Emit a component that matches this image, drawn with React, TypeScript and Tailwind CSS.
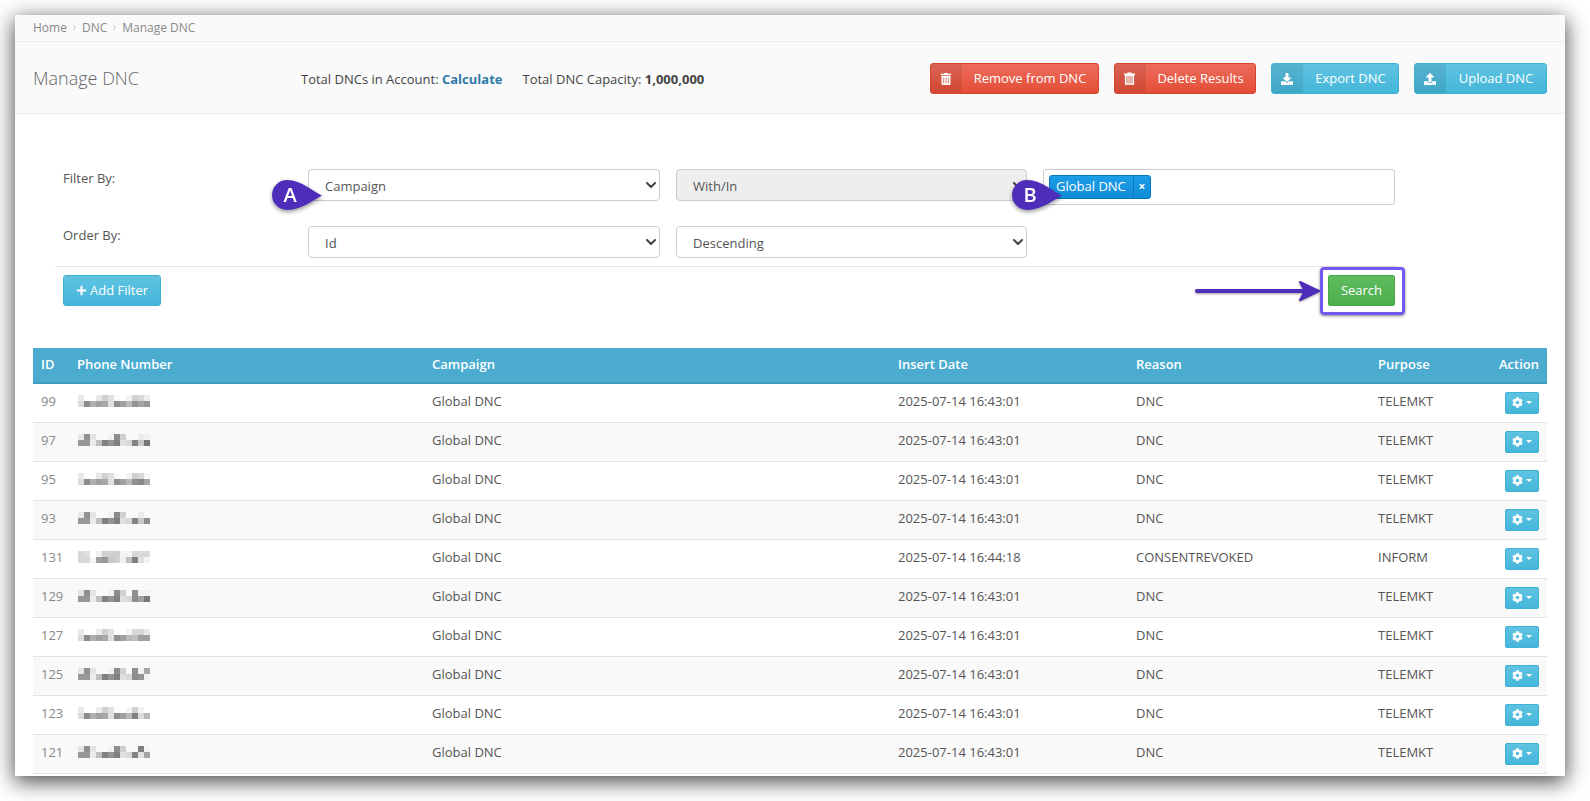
import { ChevronDown, ChevronRight } from "lucide-react"
import { FaCog, FaDownload, FaPlus, FaTrashAlt, FaUpload } from "react-icons/fa"

const phones = [
  ["e8 ff ff e8 d0 e0 fa ff f2 d0 d8 ec", "dc 8c b0 a0 a8 e0 90 a0 b8 94 a4 98"],
  ["e8 90 e4 fa fa f2 8c d0 fa fa ec f2", "98 98 ec c0 80 94 80 e0 d8 84 c8 78"],
  ["e8 ff ff e8 d0 e0 fa ff f2 d0 d8 f8", "dc 8c b0 a0 a8 e0 90 a0 b8 90 88 a8"],
  ["e8 90 e4 fa fa f2 8c d0 fa fa ec fa", "98 98 ec c0 80 94 80 e0 d8 84 c8 8c"],
  ["d8 e0 ff f0 d0 d0 d0 f4 f4 d8 d8 d8", "d8 d8 f4 a0 98 c8 d0 f0 c0 80 e0 f4"],
  ["e4 90 e4 fa fa f2 8c d0 fa 90 f2 f2", "98 98 ec c0 80 94 80 e0 d8 8c a0 78"],
  ["e8 ff ff ec d0 e0 fc ff f4 d8 d8 e8", "dc 8c b0 a0 a8 e0 90 a0 b8 c0 a0 a0"],
  ["e4 90 e4 fa fa f2 8c d0 fa 90 f2 a8", "98 98 ec c0 80 94 80 e0 d8 8c 94 f4"],
  ["e8 ff ff ec d0 e0 fc ff f4 d0 f4 ff", "dc 8c b0 a0 a8 e0 90 a0 b8 80 dc b8"],
  ["e4 90 e4 fa fa f2 8c d0 fa fa 80 f4", "98 98 ec c0 80 94 80 e0 d8 84 e0 a4"],
]

const rows = [
  { id: 99, date: "2025-07-14 16:43:01", reason: "DNC", purpose: "TELEMKT" },
  { id: 97, date: "2025-07-14 16:43:01", reason: "DNC", purpose: "TELEMKT" },
  { id: 95, date: "2025-07-14 16:43:01", reason: "DNC", purpose: "TELEMKT" },
  { id: 93, date: "2025-07-14 16:43:01", reason: "DNC", purpose: "TELEMKT" },
  { id: 131, date: "2025-07-14 16:44:18", reason: "CONSENTREVOKED", purpose: "INFORM" },
  { id: 129, date: "2025-07-14 16:43:01", reason: "DNC", purpose: "TELEMKT" },
  { id: 127, date: "2025-07-14 16:43:01", reason: "DNC", purpose: "TELEMKT" },
  { id: 125, date: "2025-07-14 16:43:01", reason: "DNC", purpose: "TELEMKT" },
  { id: 123, date: "2025-07-14 16:43:01", reason: "DNC", purpose: "TELEMKT" },
  { id: 121, date: "2025-07-14 16:43:01", reason: "DNC", purpose: "TELEMKT" },
]

function BlurredPhone({ data }: { data: string[] }) {
  return (
    <svg width="72" height="12" viewBox="0 0 72 12" className="block" shapeRendering="crispEdges">
      {data.map((line, y) =>
        line.split(" ").map((v, x) =>
          v === "ff" ? null : <rect key={`${x}-${y}`} x={x * 6} y={y * 6} width="6" height="6" fill={`#${v}${v}${v}`} />,
        ),
      )}
    </svg>
  )
}

function Marker({ letter, className }: { letter: string; className: string }) {
  return (
    <div className={`absolute z-10 h-[30px] w-[50px] drop-shadow-[0_2px_2px_rgba(0,0,0,0.4)] ${className}`}>
      <svg width="50" height="30" viewBox="0 0 50 30" className="block">
        <path d="M50 15.5C41 12 30 0 15 0A15 15 0 0 0 15 30C30 30 41 20 50 15.5Z" fill="#4f2dbb" />
      </svg>
      <span className="absolute left-[9px] top-0 w-[18px] text-center text-[20px] font-semibold leading-[30px] text-white">
        {letter}
      </span>
    </div>
  )
}

function Select({ value, disabled }: { value: string; disabled?: boolean }) {
  return (
    <div className="relative h-8">
      <select
        disabled={disabled}
        defaultValue={value}
        className={`h-8 w-full appearance-none rounded-[4px] border border-[#ccc] pl-4 pt-[4px] text-[13px] text-[#555] opacity-100 ${disabled ? "bg-[#eee]" : "bg-white"}`}
      >
        <option>{value}</option>
      </select>
      <ChevronDown size={16} strokeWidth={3} className="pointer-events-none absolute right-px top-2 text-[#444]" />
    </div>
  )
}

// the greyed out bin on the Delete Results button
function PaleTrash() {
  return (
    <svg width="11" height="13" viewBox="0 0 11 13">
      <path d="M3.5 1.5V.5H7.5V1.5H11V3H0V1.5Z" fill="#fff" />
      <path d="M1.5 3.5H9.5V12.2H1.5Z" fill="#fff" fillOpacity="0.55" stroke="#fff" strokeWidth="1.2" />
    </svg>
  )
}

function IconButton({ label, icon, kind, width }: { label: string; icon: React.ReactNode; kind: "red" | "blue"; width: string }) {
  const tone =
    kind === "red"
      ? "border-[#d8442e] bg-gradient-to-b from-[#ec6c5b] to-[#e44d36]"
      : "border-[#40b0d4] bg-gradient-to-b from-[#5fc3e2] to-[#44b6da]"
  return (
    <button className={`flex h-[31px] items-stretch overflow-hidden rounded-[3px] border text-[13px] text-white ${tone} ${width}`}>
      <span className="flex w-[31px] shrink-0 items-center justify-center bg-black/[.08] pr-[2px] text-[12px]">{icon}</span>
      <span className="flex flex-1 items-center justify-center">{label}</span>
    </button>
  )
}

export default function App() {
  return (
    <div className="h-[801px] overflow-hidden bg-white pl-[15px] pt-[15px] font-['Open_Sans',sans-serif] text-[13px] text-[#555]">
      <div className="h-[761px] w-[1550px] overflow-hidden bg-white shadow-[0_5px_20px_1px_rgba(0,0,0,0.7)]">
        <div className="flex h-[27px] items-center gap-[3px] border-b border-[#eee] bg-[#fafafa] pb-px pl-[18px] text-[12px] text-[#888]">
          <span>Home</span>
          <ChevronRight size={9} className="text-[#aaa]" />
          <span>DNC</span>
          <ChevronRight size={9} className="text-[#aaa]" />
          <span>Manage DNC</span>
        </div>

        <div className="flex h-[72px] items-center border-b border-[#eee] bg-[#fafafa] pl-[18px] pr-[18px] pt-[4px]">
          <h1 className="mb-[2px] w-[268px] text-[18px] font-light text-[#666]">Manage DNC</h1>
          <span className="text-[#444]">
            Total DNCs in Account: <b className="font-bold text-[#2f7ba8]">Calculate</b>
          </span>
          <span className="ml-5 text-[#444]">
            Total DNC Capacity: <b className="font-bold">1,000,000</b>
          </span>
          <div className="mb-[2px] ml-auto flex gap-[15px]">
            <IconButton kind="red" width="w-[169px]" label="Remove from DNC" icon={<FaTrashAlt />} />
            <IconButton kind="red" width="w-[142px]" label="Delete Results" icon={<PaleTrash />} />
            <IconButton kind="blue" width="w-[128px]" label="Export DNC" icon={<FaDownload />} />
            <IconButton kind="blue" width="w-[133px]" label="Upload DNC" icon={<FaUpload />} />
          </div>
        </div>

        <div className="px-[18px] pt-[55px]">
          <div className="ml-[30px] grid w-[1332px] grid-cols-[229px_352px_351px_352px] gap-x-4 gap-y-[21px]">
            <span className="leading-[18px]">Filter By:</span>
            <div className="relative">
              <Marker letter="A" className="left-[-36px] top-[11px]" />
              <Select value="Campaign" />
            </div>
            <Select value="With/In" disabled />
            <div className="relative flex h-9 items-start rounded-[3px] border border-[#ccc] bg-white pl-[5px] pt-[5px]">
              <Marker letter="B" className="left-[-32px] top-[10px]" />
              <span className="flex h-6 w-[102px] items-stretch rounded-[3px] border border-[#0a78c0] bg-gradient-to-b from-[#1c9de8] to-[#0f8cd8] text-white">
                <span className="flex flex-1 items-center pl-[6px]">Global DNC</span>
                <span className="flex w-[17px] items-center justify-center border-l border-[#0a78c0] text-[12px] font-bold">×</span>
              </span>
            </div>
            <span className="leading-[18px]">Order By:</span>
            <Select value="Id" />
            <Select value="Descending" />
          </div>

          <div className="ml-[22px] mt-2 w-[1340px] border-t border-[#e5e5e5] pl-[8px] pt-2">
            <div className="flex items-start justify-between">
              <button className="flex h-[31px] w-[98px] items-center justify-center gap-[3px] rounded-[3px] border border-[#40b0d4] bg-gradient-to-b from-[#5fc3e2] to-[#44b6da] font-medium text-white">
                <FaPlus size={11} />
                Add Filter
              </button>
              <div className="relative">
                <svg
                  width="126"
                  height="22"
                  viewBox="0 0 126 22"
                  className="absolute left-[-133px] top-[5px] drop-shadow-[0_1px_1px_rgba(0,0,0,0.4)]"
                >
                  <path d="M2 11H112" stroke="#4f2dbb" strokeWidth="4" strokeLinecap="round" />
                  <path d="M105 2L124 11L105 20L110 11Z" fill="#4f2dbb" stroke="#4f2dbb" strokeWidth="2" strokeLinejoin="round" />
                </svg>
                <div className="absolute -bottom-[9px] -left-[8px] -right-[10px] -top-2 rounded-[4px] border-[3px] border-[#7557ee] shadow-[0_1px_3px_rgba(0,0,0,0.5)]" />
                <button className="h-[31px] w-[67px] rounded-[2px] border border-[#45a845] bg-gradient-to-b from-[#5fbc5f] to-[#4cae4c] text-white">
                  Search
                </button>
              </div>
            </div>
          </div>

          <table className="mt-[42px] w-[1514px] table-fixed border-collapse">
            <thead>
              <tr className="h-[35px] border-b-2 border-[#3e9fbd] bg-[#4bacd0] text-left text-white">
                <th className="w-[36px] pl-2 font-semibold">ID</th>
                <th className="w-[355px] pl-2 font-semibold">Phone Number</th>
                <th className="w-[466px] pl-2 font-semibold">Campaign</th>
                <th className="w-[238px] pl-2 font-semibold">Insert Date</th>
                <th className="w-[242px] pl-2 font-semibold">Reason</th>
                <th className="w-[110px] pl-2 font-semibold">Purpose</th>
                <th className="pr-2 text-right font-semibold">Action</th>
              </tr>
            </thead>
            <tbody>
              {rows.map((row, i) => (
                <tr key={row.id} className={`h-[39px] border-b border-[#e3e3e3] ${i % 2 ? "bg-[#f9f9f9]" : "bg-white"}`}>
                  <td className="pb-[2px] pl-2 text-[#888]">{row.id}</td>
                  <td className="pb-[4px] pl-[9px]">
                    <BlurredPhone data={phones[i]} />
                  </td>
                  <td className="pb-[2px] pl-2">Global DNC</td>
                  <td className="pb-[2px] pl-2">{row.date}</td>
                  <td className="pb-[2px] pl-2">{row.reason}</td>
                  <td className="pb-[2px] pl-2">{row.purpose}</td>
                  <td className="pr-2">
                    <button className="ml-auto flex h-[22px] w-[34px] items-center justify-center gap-[3px] rounded-[2px] border border-[#40b0d4] bg-gradient-to-b from-[#5fc3e2] to-[#44b6da] text-white">
                      <FaCog size={11} />
                      <span className="h-0 w-0 border-x-[3.5px] border-t-[3.5px] border-x-transparent border-t-white" />
                    </button>
                  </td>
                </tr>
              ))}
            </tbody>
          </table>
        </div>
      </div>
    </div>
  )
}
